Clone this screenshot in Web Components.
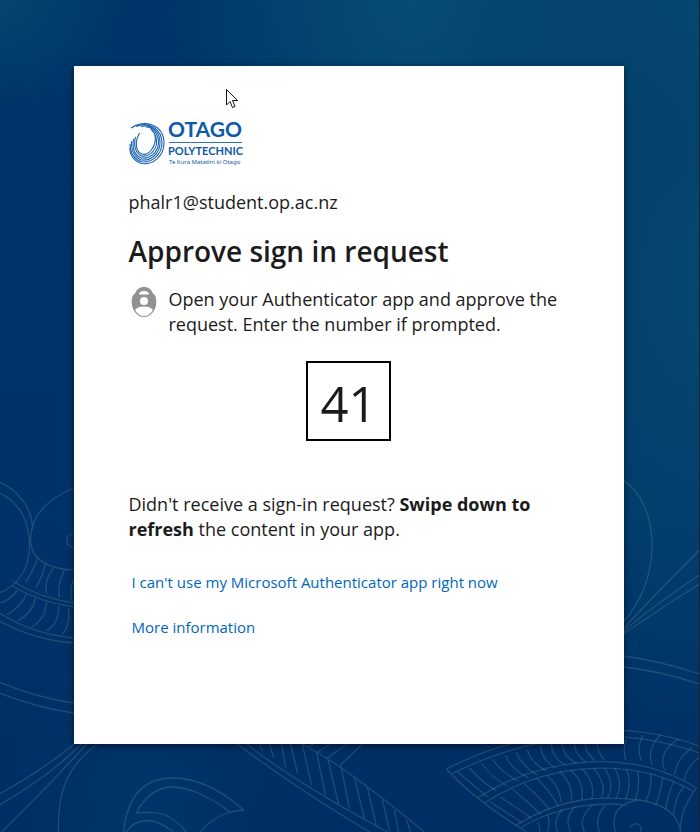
<!DOCTYPE html>
<html lang="en">
<head>
<meta charset="utf-8">
<meta name="viewport" content="width=device-width, initial-scale=1">
<title>Sign in to your account</title>
<style>
  body {
    margin: 0;
    font-family: "Open Sans", "Noto Sans", sans-serif;
    font-size: 18px;
    line-height: 25px;
    color: #1b1b1b;
  }
</style>
</head>
<body>
<sign-in-page>
  <sign-in-card>
    <college-logo slot="logo"></college-logo>
    <span slot="identity">phalr1@student.op.ac.nz</span>
    <span slot="title">Approve sign in request</span>
    <auth-message>Open your Authenticator app and approve the request. Enter the number if prompted.</auth-message>
    <display-number>41</display-number>
    <refresh-hint>Didn't receive a sign-in request? <b>Swipe down to refresh</b> the content in your app.</refresh-hint>
    <help-link href="#other">I can't use my Microsoft Authenticator app right now</help-link>
    <help-link href="#info">More information</help-link>
  </sign-in-card>
  <mouse-pointer slot="overlay"></mouse-pointer>
</sign-in-page>

<script>
"use strict";
function define(name, html, setup) {
    const template = document.createElement("template");
    template.innerHTML = html;
    customElements.define(name, class extends HTMLElement {
        constructor() {
            super();
            this.attachShadow({ mode: "open" }).append(template.content.cloneNode(true));
        }
        connectedCallback() {
            if (setup)
                setup(this);
        }
    });
}

define("page-backdrop", `
<style>
  :host {
    display: block;
    position: absolute;
    inset: 0;
    overflow: hidden;
    background:
      radial-gradient(ellipse 130px 110px at 0% 0%, #04466e, transparent),
      radial-gradient(ellipse 250px 260px at 59% 0%, #064d72, #064d7299 45%, transparent),
      radial-gradient(ellipse 260px 480px at 100% 34%, #05476f, #05476f99 50%, transparent),
      radial-gradient(ellipse 220px 180px at 100% 0%, #05466f, transparent),
      radial-gradient(ellipse 130px 260px at 20% 100%, #00356a, transparent),
      linear-gradient(#00346a, #00326a 60%, #002e64);
  }
  svg { display: block; width: 100%; height: 100%; }
  path { fill: none; stroke: #5f8c98; stroke-opacity: .32; stroke-width: 1.3; }
</style>
<svg viewBox="0 0 700 832" preserveAspectRatio="xMidYMax slice" aria-hidden="true">
  <!-- left spiral -->
  <path d="M0 482C20 491 33 509 33 530M0 493C20 502 30 522 30 545C30 567 20 585 0 593
    M74 488C46 500 31 518 31 540C31 560 50 569 74 570M74 533C65 536 65 545 74 548
    M13 581Q40 598 74 603M13 586Q40 602 74 607M0 603Q10 601 18 590
    M0 613Q32 634 74 638M0 621Q34 640 74 643M0 682Q35 697 74 703M0 693Q35 707 74 713"/>
  <path d="M38 558Q34 571 26 582M46 563Q43 577 36 588M54 568Q44 580 47 594M65 570Q57 585 60 598M74 580Q69 592 73 602
    M27 594Q22 607 7 615M36 598Q33 613 18 621M47 602Q46 619 32 627M59 606Q60 623 47 631M69 608Q71 626 63 634"/>
  <path d="M75 744Q40 772 0 794M82 744Q50 776 0 805M87 744Q50 785 2 832M98 744C65 768 58 795 59 832"/>
  <!-- small leaf -->
  <path d="M124 832C128 795 145 778 173 778C200 778 225 793 244 810L230 812Q212 818 201 832
    M230 812C213 798 190 787 173 787C155 787 143 800 137 813C158 811 170 812 187 832M126 832Q145 809 174 832"/>
  <!-- ribbed leaf -->
  <path d="M238 744Q290 784 370 832M247 744Q300 785 388 832M302 744Q340 762 425 832
    M260 744L263 751M270 744L274 757M282 744L286 767M291 744L298 773M303 745L312 785M317 752L326 795M328 757L339 804
    M341 764L350 809M355 778L365 819M368 788L377 826M383 800L390 831M395 810L399 832M407 820L411 832
    M309 747L314 744M317 753L330 744M328 758L349 743M341 765L363 744"/>
  <!-- fan -->
  <path d="M447 769C500 742 600 710 700 746M452 774C510 745 600 718 700 753
    M478 798C540 758 630 746 697 788M485 803C545 764 630 754 695 792
    M517 825C560 798 600 795 640 800Q678 806 681 832M522 827C560 805 600 802 627 805
    M447 769Q475 800 527 832M616 832C610 812 622 802 640 800M697 788Q680 810 681 832
    M631 828Q632 823 638 824Q643 826 641 832"/>
  <path d="M458 772L488 797M470 768Q482 782 497 791M482 763Q492 778 508 786M493 759Q502 773 519 781M506 755Q511 769 529 778
    M517 752Q521 765 538 775M528 749Q530 762 547 771M541 745Q541 759 556 768M552 743Q551 757 566 765M563 741Q561 754 576 763
    M575 740Q573 752 586 762M586 740Q584 751 596 761M597 740Q597 751 605 760M627 739Q623 748 626 760
    M644 735Q636 748 642 761M661 735Q646 750 653 765M679 739Q658 752 665 770M693 747Q676 760 675 775M700 757Q686 768 685 780"/>
  <path d="M491 802L523 823M501 797L532 818M513 789Q527 801 541 814M525 784Q538 795 550 809M537 778Q547 787 559 806
    M547 775Q560 785 562 803M560 771Q574 784 572 801M571 770Q586 783 582 800M583 769Q597 784 592 799M594 768Q608 785 602 798
    M605 768Q616 784 608 798M615 768Q624 783 617 798M627 769Q633 783 626 799M638 771Q641 786 636 800M651 773Q653 789 646 801
    M663 777Q662 790 656 805M674 782Q669 793 666 809M684 787Q675 799 674 815
    M538 822Q541 826 540 832M548 815Q551 822 548 832M563 809Q553 820 558 832M576 806Q564 818 571 832M593 805Q578 818 585 832
    M606 805Q594 818 600 832"/>
  <!-- right petal and rays -->
  <path d="M624 480C660 505 664 576 624 622M624 629Q645 605 700 550M624 632Q645 612 700 575M624 634Q650 616 700 584
    M624 656Q661 661 700 674M624 667Q661 671 700 684"/>
</svg>`);

define("sign-in-page", `
<style>
  :host {
    display: block;
    position: relative;
    box-sizing: border-box;
    min-height: 100vh;
    padding: 66px 2px 88px 0;
    border-right: 1px solid #222126;
  }
  main { position: relative; }
</style>
<page-backdrop></page-backdrop>
<main><slot></slot></main>
<slot name="overlay"></slot>`);

define("sign-in-card", `
<style>
  :host {
    display: block;
    box-sizing: border-box;
    max-width: 550px;
    margin: 0 auto;
    padding: 55px 55px 104px;
    background: #fff;
    box-shadow: 0 2px 7px #0008;
  }
  .identity { margin-top: 24px; }
  h1 {
    margin: 16px 0;
    font-size: 28px;
    line-height: 40px;
    font-weight: 600;
  }
</style>
<slot name="logo"></slot>
<div class="identity"><slot name="identity"></slot></div>
<h1><slot name="title"></slot></h1>
<slot></slot>`);

// Ring of the logo: nested arcs, opening towards the upper left
define("college-logo", `
<style>
  :host { display: block; height: 45px; }
  svg { display: block; overflow: visible; }
  .ring { fill: none; stroke: #1b62b0; stroke-width: 1.1; }
  text { fill: #0f59a9; font-family: Lato, sans-serif; }
  .motto { font-family: "Noto Sans", sans-serif; }
</style>
<svg width="116" height="45" viewBox="0 0 116 45" role="img" aria-label="Otago Polytechnic">
  <g class="ring">
    <path d="M2 7C14-2 35 3 35 22C35 36 23 44 13 42.500C6 41 1 35 .8 27"/>
    <path d="M7 5.500C20 0 33 8 33 22C33 34 22 42 13 40.800C6 39 1 32 1 23"/>
    <path d="M12 5.500C23 2.500 31 11 31 22C31 33 21 40 13 39C6 37 2 30 2.500 20"/>
    <path d="M17 6C25 6 29.500 14 29.500 22C29 32 20 38 13 37C6 35 3 28 4.500 18"/>
    <path d="M22 8C26 12 28 17 27.500 23C26 31 19 36 13 35C7 33 4 25 6.500 16"/>
    <path d="M26 14C28 26 19 35 13 33C7 31 5 22 10.500 12"/>
  </g>
  <text x="39" y="16" font-size="21" font-weight="700">OTAGO</text>
  <path d="M40 21.500H113" stroke="#2e73b8"/>
  <text x="39" y="34" font-size="11" font-weight="700">POLYTECHNIC</text>
  <text class="motto" x="40" y="43" font-size="6">Te Kura Matatini ki Otago</text>
</svg>`);

define("auth-message", `
<style>
  :host { display: flex; gap: 12px; }
  svg { flex: none; margin: 0 0 0 2px; }
  p { margin: 0; }
</style>
<svg width="26" height="30" viewBox="0 0 26 30" aria-hidden="true">
  <path fill="#919191" fill-rule="evenodd" d="M13 0C17.500 0 20.500 2.500 21.500 6C24.500 8 25.500 11 25.200 16C25 24 19 30 13 30S1 24 .8 16C.5 11 1.500 8 4.500 6C5.500 2.500 8.500 0 13 0ZM8 7.500H18C18 5 15.500 4 13 4S8 5 8 7.500Z"/>
  <circle cx="13" cy="14" r="4" fill="#fff"/>
  <path fill="#fff" d="M4 23C6 20.500 9 19.500 13 19.500S20 20.500 22 23C19.500 27 16.500 29 13 29S6.500 27 4 23Z"/>
</svg>
<p><slot></slot></p>`);

define("display-number", `
<style>
  :host {
    display: block;
    box-sizing: border-box;
    width: fit-content;
    margin: 24px auto 51px;
    padding: 7px 12px 3px;
    border: 2px solid #000;
    font-size: 49px;
    line-height: 66px;
  }
</style>
<slot></slot>`);

define("refresh-hint", `
<style>
  :host { display: block; margin-bottom: 28px; }
</style>
<slot></slot>`);

define("help-link", `
<style>
  :host { display: block; margin: 20px 3px 0; font-size: 15px; }
  a { color: #0067b8; text-decoration: none; }
  a:hover { text-decoration: underline; }
</style>
<a><slot></slot></a>`, host => {
    host.shadowRoot.querySelector("a").setAttribute("href", host.getAttribute("href"));
});

define("mouse-pointer", `
<style>
  :host { position: absolute; left: 225px; top: 88px; pointer-events: none; }
  svg { display: block; }
</style>
<svg width="14" height="21" viewBox="0 0 14 21" aria-hidden="true">
  <path d="M1.500 1.500V17L5 13.500L7.500 19.500L10 18.500L7.500 12.500H12.500Z" fill="#fff" stroke="#111"/>
</svg>`);
</script>
</body>
</html>
